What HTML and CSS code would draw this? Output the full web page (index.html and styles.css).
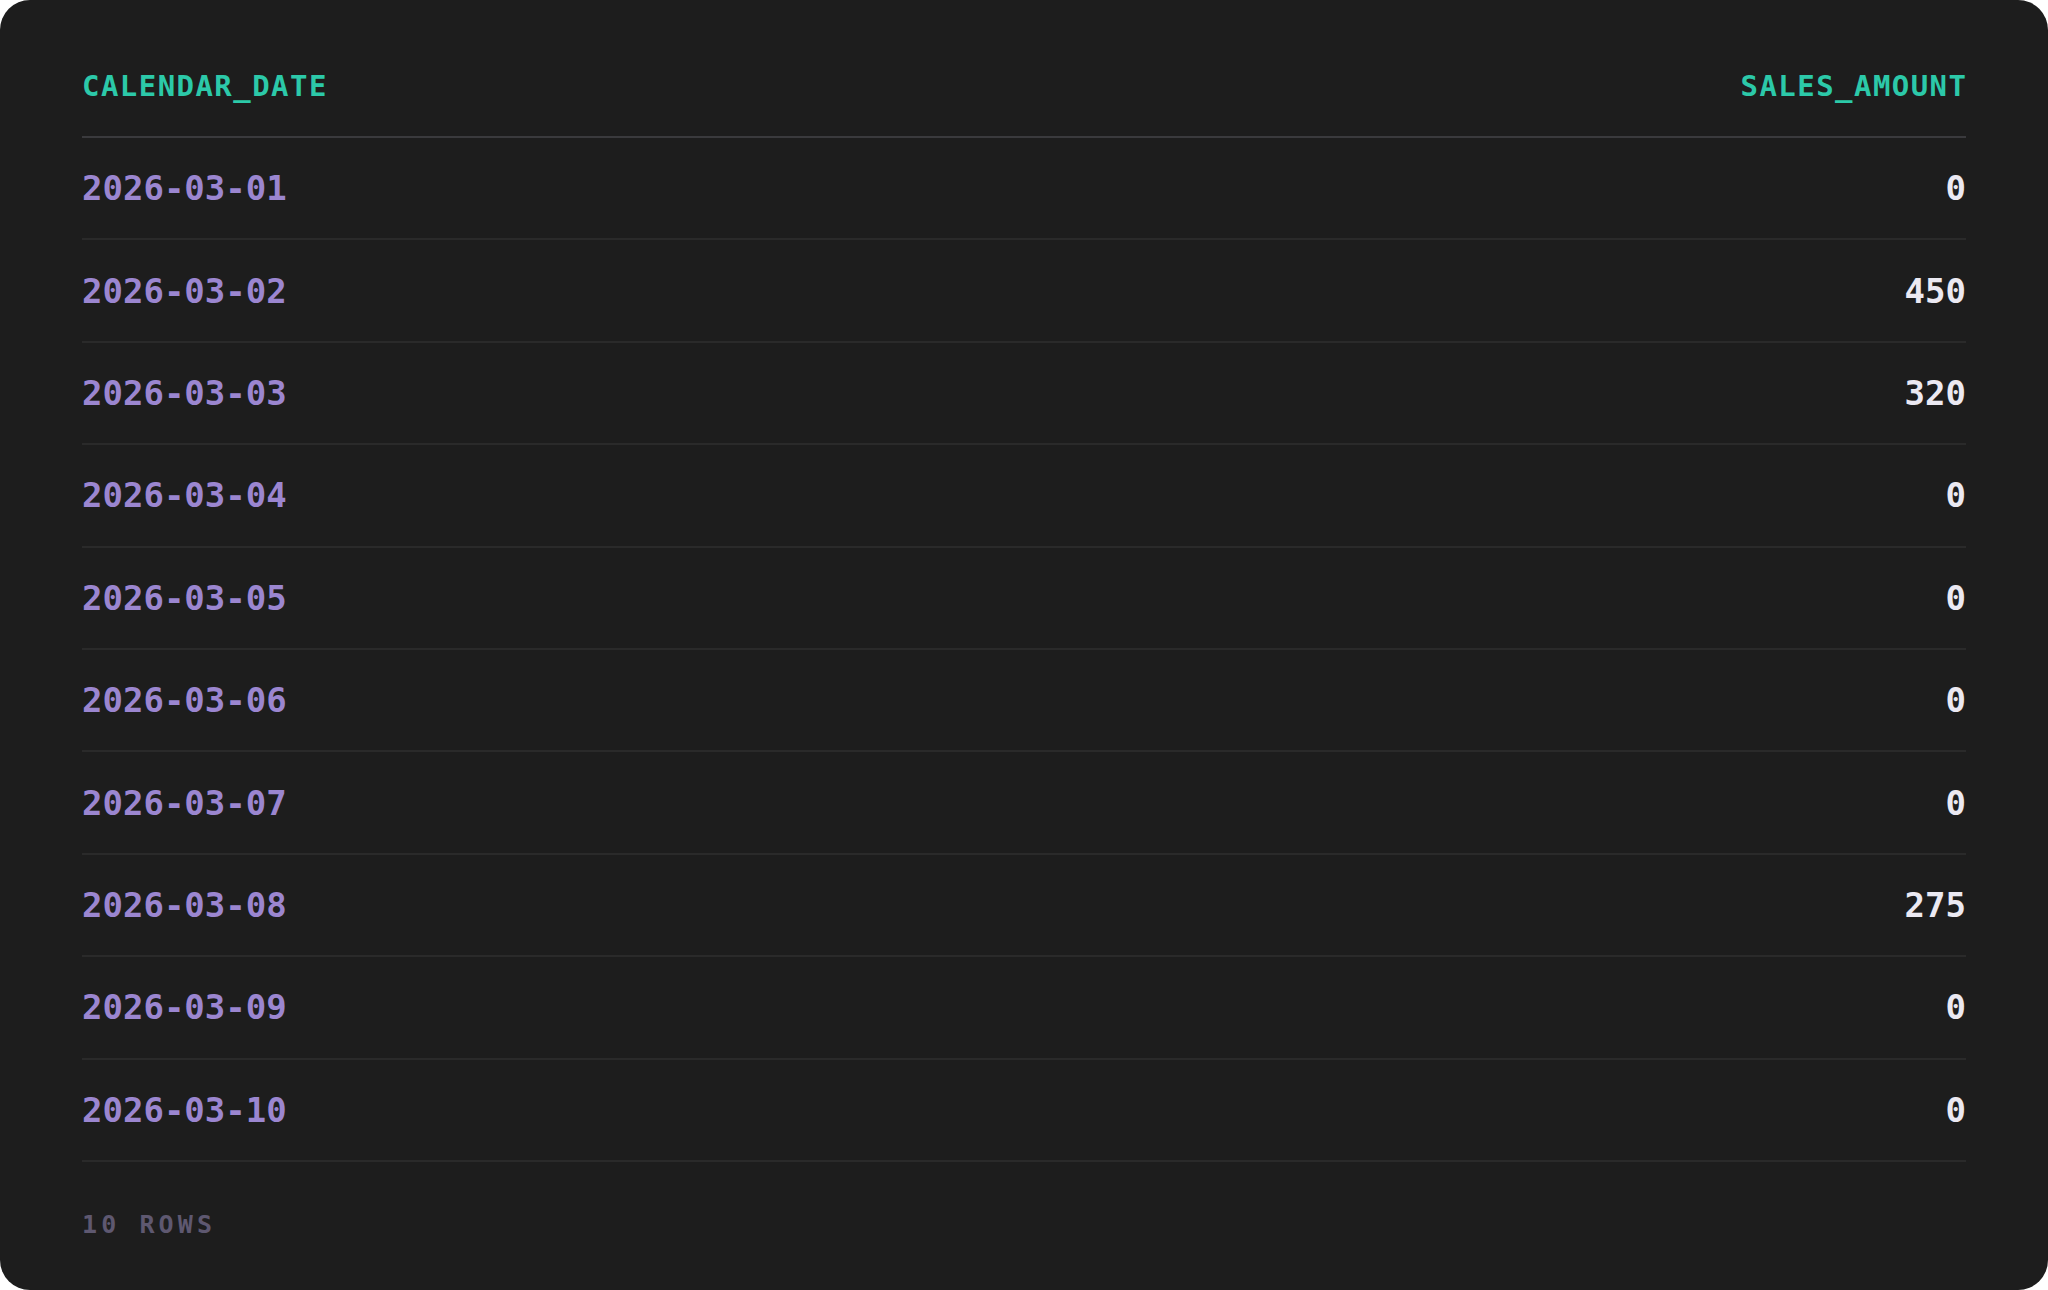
FILE: index.html
```html
<!DOCTYPE html>
<html lang="en">
<head>
<meta charset="utf-8">
<title>Results</title>
<link rel="stylesheet" href="styles.css">
</head>
<body>
<div class="card">
  <div class="table">
    <div class="row head">
      <div class="cell th">CALENDAR_DATE</div>
      <div class="cell th num">SALES_AMOUNT</div>
    </div>
    <div class="row"><div class="cell date">2026-03-01</div><div class="cell val">0</div></div>
    <div class="row"><div class="cell date">2026-03-02</div><div class="cell val">450</div></div>
    <div class="row"><div class="cell date">2026-03-03</div><div class="cell val">320</div></div>
    <div class="row"><div class="cell date">2026-03-04</div><div class="cell val">0</div></div>
    <div class="row"><div class="cell date">2026-03-05</div><div class="cell val">0</div></div>
    <div class="row"><div class="cell date">2026-03-06</div><div class="cell val">0</div></div>
    <div class="row"><div class="cell date">2026-03-07</div><div class="cell val">0</div></div>
    <div class="row"><div class="cell date">2026-03-08</div><div class="cell val">275</div></div>
    <div class="row"><div class="cell date">2026-03-09</div><div class="cell val">0</div></div>
    <div class="row"><div class="cell date">2026-03-10</div><div class="cell val">0</div></div>
  </div>
  <div class="footer">10 ROWS</div>
</div>
</body>
</html>
```
FILE: styles.css
```css
html, body {
  margin: 0;
  padding: 0;
  background: #ffffff;
}
.card {
  width: 2048px;
  height: 1290px;
  box-sizing: border-box;
  background: #1d1d1d;
  border-radius: 30px;
  padding: 0 82px;
  font-family: "DejaVu Sans Mono", "Liberation Mono", monospace;
  overflow: hidden;
}
.table {
  display: flex;
  flex-direction: column;
}
.row {
  display: flex;
  justify-content: space-between;
  align-items: center;
  height: 102.4px;
  box-sizing: border-box;
  border-bottom: 2px solid #2a2a2a;
}
.row.head {
  height: 138px;
  align-items: flex-start;
  padding-top: 68px;
  border-bottom: 2px solid #3a3a3d;
}
.th {
  font-size: 29px;
  line-height: 36px;
  font-weight: bold;
  letter-spacing: 1.45px;
  color: #2cc9a9;
}
.th.num {
  margin-right: -1.45px;
}
.date {
  font-size: 34px;
  font-weight: bold;
  color: #9b86d0;
}
.val {
  font-size: 34px;
  font-weight: bold;
  color: #ebe9f2;
}
.footer {
  padding-top: 48px;
  font-size: 25px;
  font-weight: bold;
  letter-spacing: 4.1px;
  color: #5e5870;
}
```
